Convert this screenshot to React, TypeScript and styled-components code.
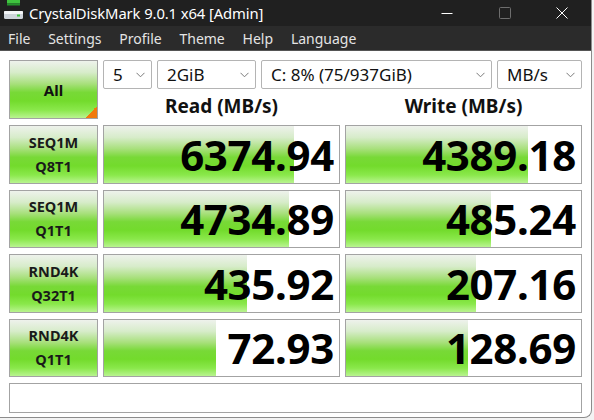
import { Fragment } from 'react';
import styled, { createGlobalStyle, css } from 'styled-components';

const GlobalStyle = createGlobalStyle`
  html, body {
    margin: 0;
    padding: 0;
    background: #f3f3f3;
  }
  body {
    font-family: "Noto Sans", "Open Sans", sans-serif;
  }
`;

const greenGradient = `linear-gradient(180deg, #eef2ec 0%, #d7ecca 20%, #a8e07c 40%, #78d937 55%, #73db2c 70%, #8ae84b 86%, #b9f490 100%)`;

const Window = styled.div`
  width: 591px;
  height: 417px;
  display: flex;
  flex-direction: column;
  background: #fff;
  border-right: 1px solid #8c8c8c;
  border-bottom: 1px solid #8c8c8c;
  border-bottom-right-radius: 8px;
  overflow: hidden;
`;

const TitleBar = styled.div`
  height: 26px;
  display: flex;
  align-items: center;
  background: #202020;
  color: #fff;
`;

const AppIcon = styled.svg`
  width: 22px;
  height: 26px;
  margin-left: 2px;
  flex-shrink: 0;
`;

const Title = styled.div`
  margin-left: 5px;
  font-size: 14.8px;
  letter-spacing: -0.1px;
  flex: 1;
  white-space: nowrap;
`;

const Controls = styled.div`
  display: flex;
  height: 100%;
`;

const CtrlButton = styled.div`
  width: 57.5px;
  height: 100%;
  display: flex;
  align-items: center;
  justify-content: center;
`;

const MenuBar = styled.div`
  height: 24px;
  display: flex;
  align-items: center;
  background: #2b2b2b;
  border-bottom: 1px solid #555;
`;

const MenuItem = styled.div`
  padding: 0 9.8px 0 8px;
  font-size: 14px;
  color: #e4e4e4;
`;

const Content = styled.div`
  flex: 1;
  padding: 9px 0 0 9px;
`;

const Board = styled.div`
  display: grid;
  grid-template-columns: 89px 237px 237px;
  grid-template-rows: 59px repeat(4, 58.5px) 30px;
  column-gap: 5px;
  row-gap: 6px;
`;

const box = css`
  box-sizing: border-box;
  border: 1px solid #a3a3a3;
`;

const AllButton = styled.div`
  ${box};
  display: flex;
  align-items: center;
  justify-content: center;
  font-size: 15px;
  font-weight: 700;
  color: #111;
  background:
    linear-gradient(135deg, transparent 50%, #f27a0c 50%) right bottom / 12px 12px no-repeat,
    ${greenGradient};
`;

const TopRight = styled.div`
  grid-column: 2 / 4;
  display: grid;
  grid-template-columns: 237px 237px;
  grid-template-rows: 29px 30px;
  column-gap: 5px;
`;

const SelectBar = styled.div`
  grid-column: 1 / 3;
  display: flex;
  gap: 5px;
`;

const Select = styled.div<{ $w?: number }>`
  ${box};
  border-color: #b4b4b4;
  border-radius: 2px;
  ${(p) => (p.$w ? `width: ${p.$w}px;` : 'flex: 1;')}
  display: flex;
  align-items: center;
  justify-content: space-between;
  padding: 0 6px 0 9px;
  font-size: 17px;
  color: #111;
`;

const Header = styled.div`
  display: flex;
  align-items: center;
  justify-content: center;
  padding-top: 3px;
  font-size: 19px;
  font-weight: 700;
  color: #111;
`;

const TestLabel = styled.div`
  ${box};
  display: flex;
  flex-direction: column;
  align-items: center;
  justify-content: center;
  gap: 3px;
  font-size: 14.5px;
  font-weight: 700;
  line-height: 21px;
  color: #1a1a1a;
  background: ${greenGradient};
`;

const Result = styled.div<{ $fill: number }>`
  ${box};
  display: flex;
  align-items: center;
  justify-content: flex-end;
  padding-right: 5px;
  font-size: 42px;
  font-weight: 700;
  color: #000;
  letter-spacing: -0.3px;
  background: ${greenGradient} left top / ${(p) => p.$fill}px 100% no-repeat, #fff;
`;

const Status = styled.div`
  ${box};
  grid-column: 1 / 4;
  background: #fff;
`;

const Chevron = () => (
  <svg width="9" height="6" viewBox="0 0 9 6">
    <polyline points="0.5,0.8 4.5,4.8 8.5,0.8" fill="none" stroke="#7a7a7a" strokeWidth="1" />
  </svg>
);

const rows = [
  { name: 'SEQ1M', param: 'Q8T1', read: '6374.94', readFill: 190, write: '4389.18', writeFill: 182 },
  { name: 'SEQ1M', param: 'Q1T1', read: '4734.89', readFill: 185, write: '485.24', writeFill: 145 },
  { name: 'RND4K', param: 'Q32T1', read: '435.92', readFill: 143, write: '207.16', writeFill: 130 },
  { name: 'RND4K', param: 'Q1T1', read: '72.93', readFill: 112, write: '128.69', writeFill: 122 },
];

const menus = ['File', 'Settings', 'Profile', 'Theme', 'Help', 'Language'];

export default function App() {
  return (
    <>
      <GlobalStyle />
      <Window>
        <TitleBar>
          <AppIcon viewBox="0 0 22 26">
            <rect x="5" y="0" width="13" height="3.5" fill="#3fc43f" />
            <rect x="5" y="3.5" width="13" height="2" fill="#23902a" />
            <rect x="2" y="11" width="19" height="8" rx="1.5" fill="#cfd5db" />
            <rect x="2" y="11" width="19" height="3" rx="1" fill="#f4f6f8" />
            <rect x="15" y="14.5" width="3" height="2" fill="#3fc43f" />
          </AppIcon>
          <Title>CrystalDiskMark 9.0.1 x64 [Admin]</Title>
          <Controls>
            <CtrlButton>
              <svg width="12" height="12" viewBox="0 0 12 12">
                <line x1="0.5" y1="6.5" x2="11.5" y2="6.5" stroke="#fff" strokeWidth="1" />
              </svg>
            </CtrlButton>
            <CtrlButton>
              <svg width="12" height="12" viewBox="0 0 12 12">
                <rect x="0.5" y="0.5" width="11" height="11" rx="1" fill="none" stroke="#6e6e6e" strokeWidth="1" />
              </svg>
            </CtrlButton>
            <CtrlButton>
              <svg width="12" height="12" viewBox="0 0 12 12">
                <path d="M0.5 0.5 L11.5 11.5 M11.5 0.5 L0.5 11.5" stroke="#fff" strokeWidth="1" />
              </svg>
            </CtrlButton>
          </Controls>
        </TitleBar>
        <MenuBar>
          {menus.map((m) => (
            <MenuItem key={m}>{m}</MenuItem>
          ))}
        </MenuBar>
        <Content>
          <Board>
            <AllButton>All</AllButton>
            <TopRight>
              <SelectBar>
                <Select $w={49}>5<Chevron /></Select>
                <Select $w={99}>2GiB<Chevron /></Select>
                <Select $w={231}>C: 8% (75/937GiB)<Chevron /></Select>
                <Select>MB/s<Chevron /></Select>
              </SelectBar>
              <Header>Read (MB/s)</Header>
              <Header>Write (MB/s)</Header>
            </TopRight>
            {rows.map((r) => (
              <Fragment key={`${r.name}-${r.param}`}>
                <TestLabel>
                  <span>{r.name}</span>
                  <span>{r.param}</span>
                </TestLabel>
                <Result $fill={r.readFill}>{r.read}</Result>
                <Result $fill={r.writeFill}>{r.write}</Result>
              </Fragment>
            ))}
            <Status />
          </Board>
        </Content>
      </Window>
    </>
  );
}
